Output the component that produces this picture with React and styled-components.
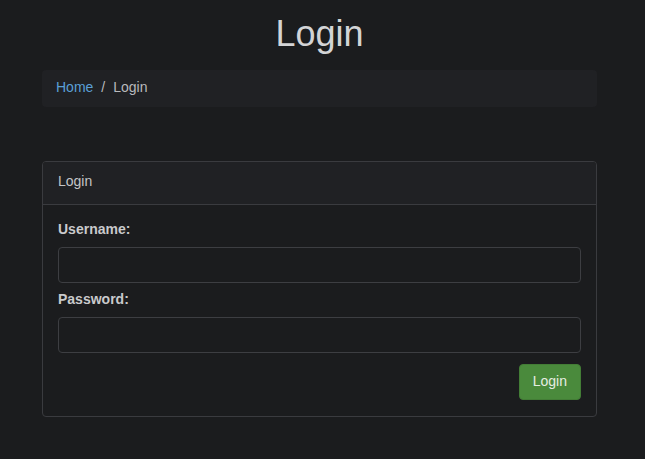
import React from "react";
import styled, { createGlobalStyle } from "styled-components";

const Global = createGlobalStyle`
  html, body { margin: 0; padding: 0; background: #1b1c1e; }
  body { font-family: "Liberation Sans", Arial, sans-serif; color: #c9cacc; }
  * { box-sizing: border-box; }
`;

const Page = styled.div`
  width: 555px;
  margin-left: 42px;
  padding-top: 13px;
`;

const Title = styled.h1`
  margin: 0;
  text-align: center;
  font-size: 36px;
  font-weight: 400;
  line-height: 42px;
  color: #d3d4d6;
`;

const Breadcrumb = styled.nav`
  margin-top: 15px;
  height: 37px;
  background: #202124;
  border-radius: 4px;
  display: flex;
  align-items: center;
  padding: 0 14px 4px;
  font-size: 14px;
  gap: 8px;
`;

const Crumb = styled.span`
  color: ${(p) => (p.$link ? "#5a9fd6" : "#b9babd")};
`;

const Card = styled.section`
  margin-top: 54px;
  border: 1px solid #3a3b3f;
  border-radius: 4px;
  overflow: hidden;
`;

const CardHeader = styled.div`
  height: 43px;
  background: #202124;
  border-bottom: 1px solid #3a3b3f;
  display: flex;
  align-items: center;
  padding: 0 15px 4px;
  font-size: 14px;
  color: #c3c4c7;
`;

const CardBody = styled.form`
  padding: 14px 15px 16px;
  display: flex;
  flex-direction: column;
`;

const Label = styled.label`
  font-size: 14px;
  font-weight: 700;
  color: #c9cacc;
  line-height: 20px;
  margin-bottom: 8px;
`;

const Input = styled.input`
  height: 36px;
  width: 100%;
  background: #1b1c1e;
  border: 1px solid #3d3e42;
  border-radius: 4px;
  margin-bottom: ${(p) => p.$mb}px;
  outline: none;
`;

const Actions = styled.div`
  display: flex;
  justify-content: flex-end;
`;

const Button = styled.button`
  height: 36px;
  padding: 0 13px 2px;
  background: #4a8a3c;
  border: 1px solid #437d36;
  border-radius: 4px;
  color: #e6ede2;
  font-family: "Liberation Sans", Arial, sans-serif;
  font-size: 14px;
`;

export default function App() {
  return (
    <>
      <Global />
      <Page>
        <Title>Login</Title>
        <Breadcrumb>
          <Crumb $link>Home</Crumb>
          <Crumb>/</Crumb>
          <Crumb>Login</Crumb>
        </Breadcrumb>
        <Card>
          <CardHeader>Login</CardHeader>
          <CardBody onSubmit={(e) => e.preventDefault()}>
            <Label>Username:</Label>
            <Input type="text" $mb={6} />
            <Label>Password:</Label>
            <Input type="password" $mb={11} />
            <Actions>
              <Button type="submit">Login</Button>
            </Actions>
          </CardBody>
        </Card>
      </Page>
    </>
  );
}
